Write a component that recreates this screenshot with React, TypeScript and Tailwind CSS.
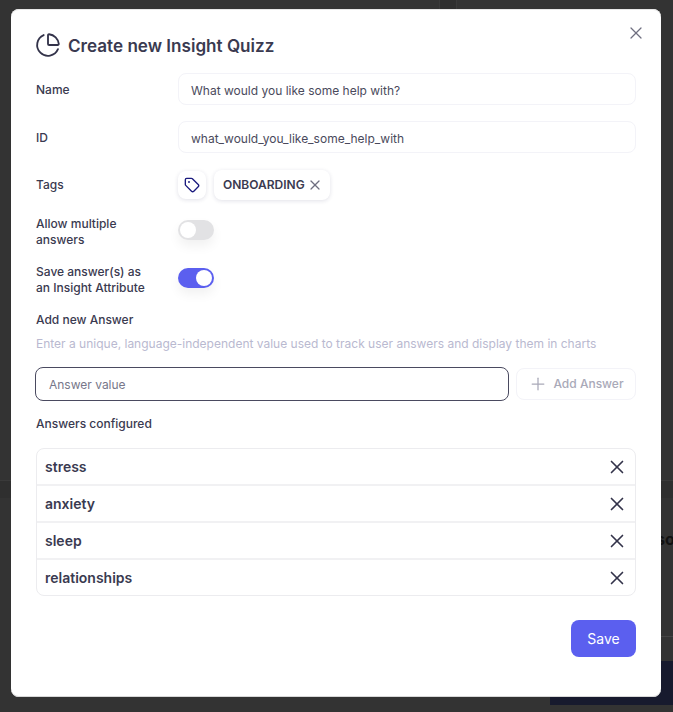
import { X, Plus, Tag, PieChart } from 'lucide-react';

const answers = ['stress', 'anxiety', 'sleep', 'relationships'];

function Toggle({ on }: { on: boolean }) {
  return (
    <div
      className={`mt-1 flex h-5 w-9 items-center rounded-full p-0.5 shadow-[0_6px_12px_rgba(0,0,0,0.06)] ${
        on ? 'justify-end bg-[#5b5fef]' : 'justify-start bg-[#e2e2e4]'
      }`}
    >
      <div className="h-4 w-4 rounded-full bg-white" />
    </div>
  );
}

export default function App() {
  return (
    <div className="relative h-[712px] w-[673px] overflow-hidden bg-[#333333] font-['Inter',sans-serif] text-[#3a3a50]">
      {/* dimmed page behind the modal */}
      <div className="absolute left-0 top-[480px] h-[18px] w-full border-t border-[#3a3a3a] bg-[#2f2f2f]" />
      <div className="absolute left-[439px] top-0 h-[9px] w-[18px] border-x border-[#3a3a3a] bg-[#2f2f2f]" />
      <div className="absolute left-[661px] top-[636px] h-px w-3 bg-[#444444]" />
      <div className="absolute left-[550px] top-[661px] h-[44px] w-[123px] bg-[#171a2e]" />
      <div className="absolute left-[656px] top-[527px] text-base font-bold text-[#111111]">so</div>

      <div className="absolute left-[11px] top-[9px] flex h-[688px] w-[650px] flex-col rounded-lg bg-white px-[25px] pt-5 shadow-[inset_0_-1px_0_#d8d8d8,inset_0_1px_0_#e6e6e6]">
        <button className="absolute right-[15px] top-[14px] text-[#6f6f80]">
          <X size={20} strokeWidth={1.5} />
        </button>

        <div className="flex h-8 items-center gap-[7px]">
          <PieChart size={26} strokeWidth={1.7} className="-ml-px text-[#33334a]" />
          <h1 className="mt-0.5 text-[17.1px] font-semibold">Create new Insight Quizz</h1>
        </div>

        <div className="mt-3 flex h-8 items-center">
          <label className="w-[142px] pt-0.5 text-xs font-medium">Name</label>
          <div className="flex h-8 flex-1 items-center rounded-lg border border-[#f3f3f8] px-3 pt-1 text-xs text-[#4a4a5c]">
            What would you like some help with?
          </div>
        </div>

        <div className="mt-4 flex h-8 items-center">
          <label className="w-[142px] pt-0.5 text-xs font-medium">ID</label>
          <div className="flex h-8 flex-1 items-center rounded-lg border border-[#f3f3f8] px-3 pt-1 text-xs text-[#4a4a5c]">
            what_would_you_like_some_help_with
          </div>
        </div>

        <div className="mt-[17px] flex h-[30px] items-center">
          <label className="w-[142px] text-xs font-medium">Tags</label>
          <div className="flex items-center gap-2">
            <div className="flex h-7 w-7 items-center justify-center rounded-lg bg-white shadow-[0_1px_4px_rgba(40,40,90,0.14)]">
              <Tag size={16} className="text-[#1a1a7e]" />
            </div>
            <div className="flex h-[30px] w-[116px] items-center gap-0.5 rounded-lg bg-white pl-[9px] text-xs font-semibold shadow-[0_1px_4px_rgba(40,40,90,0.14)]">
              ONBOARDING
              <X size={16} strokeWidth={1.8} className="text-[#6f6f80]" />
            </div>
          </div>
        </div>

        <div className="mt-4 flex items-start">
          <label className="w-[142px] text-xs leading-4 font-medium">
            Allow multiple
            <br />
            answers
          </label>
          <Toggle on={false} />
        </div>

        <div className="mt-4 flex items-start">
          <label className="w-[142px] text-xs leading-4 font-medium">
            Save answer(s) as
            <br />
            an Insight Attribute
          </label>
          <Toggle on={true} />
        </div>

        <div className="mt-4 text-xs leading-4 font-medium">Add new Answer</div>
        <div className="mt-2 text-xs leading-4 text-[#b9b9d0]">
          Enter a unique, language-independent value used to track user answers and display them in charts
        </div>

        <div className="mt-[15px] flex items-center gap-[7px]">
          <div className="-ml-px flex h-[34px] w-[474px] items-center rounded-lg border border-[#4a4a60] px-[13px] pt-0.5 text-xs text-[#77778a]">
            Answer value
          </div>
          <div className="flex h-8 flex-1 items-center justify-center gap-[5px] rounded-lg border border-[#f3f3f8] text-xs font-medium text-[#a9a9b8]">
            <Plus size={20} strokeWidth={1.5} />
            Add Answer
          </div>
        </div>

        <div className="mt-[15px] text-xs leading-4 font-medium">Answers configured</div>

        <div className="mt-4 flex flex-col divide-y-2 divide-[#f1f1f3] rounded-lg border border-[#ececef]">
          {answers.map((answer) => (
            <div key={answer} className="flex h-[37px] items-center justify-between pr-[7px] pl-2 last:h-[35px]">
              <span className="text-sm font-semibold">{answer}</span>
              <X size={22} strokeWidth={1.8} className="text-[#33334a]" />
            </div>
          ))}
        </div>

        <div className="mt-6 flex justify-end">
          <button className="h-[37px] w-[65px] rounded-lg bg-[#5b5fef] text-sm font-normal text-white">Save</button>
        </div>
      </div>
    </div>
  );
}
